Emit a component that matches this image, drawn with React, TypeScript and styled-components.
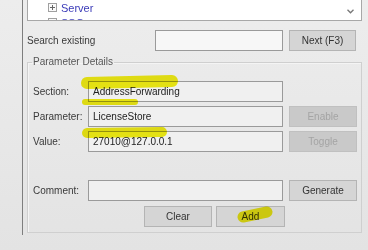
import React, { FC } from 'react';

import styled, { createGlobalStyle } from 'styled-components';

/**
 *
 * Styles
 */
const GlobalStyle = createGlobalStyle`
  html,
  body {
    margin: 0;
    padding: 0;
    background: #e4e4e4;
  }

  body {
    font-family: 'Liberation Sans', Arial, sans-serif;
    font-size: 10px;
    color: #333;
  }
`;

const Screen = styled.div`
  position: relative;
  display: flex;
  width: 368px;
  height: 250px;
  overflow: hidden;

  background: linear-gradient(#ededed, #e3e3e3);
`;

const Gutter = styled.div`
  width: 22px;
  flex: none;
`;

const Panel = styled.div`
  display: flex;
  box-sizing: border-box;
  width: 340px;
  height: 235px;
  padding-left: 4px;

  flex-direction: column;

  border-left: 1px solid #7e7e7e;
`;

const TreeBox = styled.div`
  position: relative;
  box-sizing: border-box;
  height: 21px;
  overflow: hidden;

  background: #fff;
  border: 1px solid #a8a8a8;
  border-top: none;
`;

const TreeRow = styled.div`
  display: flex;
  height: 15px;
  padding-left: 20px;

  align-items: center;
  gap: 4px;
`;

const PlusBox = styled.span`
  position: relative;
  display: block;
  box-sizing: border-box;
  width: 9px;
  height: 9px;

  background: #fafafa;
  border: 1px solid #a0a0a0;

  &::before,
  &::after {
    content: '';
    position: absolute;
    background: #666;
  }

  &::before {
    left: 1px;
    top: 3px;
    width: 5px;
    height: 1px;
  }

  &::after {
    left: 3px;
    top: 1px;
    width: 1px;
    height: 5px;
  }
`;

const TreeLabel = styled.span`
  color: #3b3bb8;
  font-size: 11px;
  line-height: 14px;
`;

const ScrollArrow = styled.svg`
  position: absolute;
  right: 7px;
  top: 9px;
`;

const SearchRow = styled.div`
  display: flex;
  height: 21px;
  margin-top: 9px;

  align-items: center;
`;

const SearchLabel = styled.span`
  flex: 1;
  color: #3a3a3a;
`;

const EndSpace = styled.span`
  width: 6px;
  flex: none;
`;

const TextBox = styled.div<{ width: number; light?: boolean }>`
  display: flex;
  box-sizing: border-box;
  width: ${({ width }) => width}px;
  height: 21px;
  padding: 0 4px;

  align-items: center;
  flex: none;

  color: #222;
  background: ${({ light }) => (light ? '#f7f7f7' : '#f0f0f0')};
  border: 1px solid #9a9a9a;
`;

const Button = styled.div<{ width: number; disabled?: boolean }>`
  display: flex;
  box-sizing: border-box;
  width: ${({ width }) => width}px;
  height: 21px;

  justify-content: center;
  align-items: center;
  flex: none;

  color: ${({ disabled }) => (disabled ? '#a4a4a4' : '#333')};
  background: ${({ disabled }) => (disabled ? '#c9c9c9' : '#d5d5d5')};
  border: 1px solid ${({ disabled }) => (disabled ? '#c0c0c0' : '#b4b4b4')};
`;

const SearchButton = styled(Button)`
  margin-left: 6px;
`;

const GroupBox = styled.fieldset`
  box-sizing: border-box;
  height: 177px;
  margin: 5px 0 0;
  padding: 13px 4px 0 5px;

  border: 1px solid #cfcfcf;
  box-shadow: inset 1px 1px 0 #f4f4f4;
`;

const GroupTitle = styled.legend`
  padding: 0 1px;
  margin-left: -1px;

  color: #555;
  line-height: 12px;
`;

const Rows = styled.div`
  display: flex;

  flex-direction: column;
  gap: 4px;
`;

const FormRow = styled.div<{ spaced?: boolean }>`
  display: flex;
  height: 21px;
  margin-top: ${({ spaced }) => (spaced ? 24 : 0)}px;

  align-items: center;
  gap: 6px;
`;

const FieldLabel = styled.span`
  width: 49px;
  flex: none;

  color: #3a3a3a;
`;

const ActionRow = styled.div`
  display: flex;
  padding-left: 111px;
  margin-top: 1px;

  gap: 4px;
`;

const Highlights = styled.svg`
  position: absolute;
  left: 0;
  top: 0;

  pointer-events: none;
  mix-blend-mode: multiply;
`;

/**
 *
 * Static items
 */
const fields = [
  { label: 'Section:', value: 'AddressForwarding' },
  { label: 'Parameter:', value: 'LicenseStore', action: 'Enable' },
  { label: 'Value:', value: '27010@127.0.0.1', action: 'Toggle' },
];

const strokes = [
  { x1: 87, y1: 83, x2: 172, y2: 81, w: 12 },
  { x1: 85, y1: 102, x2: 135, y2: 102, w: 6 },
  { x1: 87, y1: 133, x2: 162, y2: 132, w: 10 },
  { x1: 243, y1: 217, x2: 267, y2: 212, w: 11 },
];

const App: FC = () => (
  <>
    <GlobalStyle />
    <Screen>
      <Gutter />
      <Panel>
        <TreeBox>
          <TreeRow>
            <PlusBox />
            <TreeLabel>Server</TreeLabel>
          </TreeRow>
          <TreeRow>
            <PlusBox />
            <TreeLabel>SSO</TreeLabel>
          </TreeRow>
          <ScrollArrow width="7" height="5" viewBox="0 0 7 5">
            <polyline points="0.5,0.8 3.5,3.8 6.5,0.8" fill="none" stroke="#777" strokeWidth="1.3" />
          </ScrollArrow>
        </TreeBox>

        <SearchRow>
          <SearchLabel>Search existing</SearchLabel>
          <TextBox width={128} light />
          <SearchButton width={67}>Next (F3)</SearchButton>
          <EndSpace />
        </SearchRow>

        <GroupBox>
          <GroupTitle>Parameter Details</GroupTitle>
          <Rows>
            {fields.map((field) => (
              <FormRow key={field.label}>
                <FieldLabel>{field.label}</FieldLabel>
                <TextBox width={195}>{field.value}</TextBox>
                {field.action && (
                  <Button width={68} disabled>
                    {field.action}
                  </Button>
                )}
              </FormRow>
            ))}
            <FormRow spaced>
              <FieldLabel>Comment:</FieldLabel>
              <TextBox width={195} />
              <Button width={68}>Generate</Button>
            </FormRow>
            <ActionRow>
              <Button width={68}>Clear</Button>
              <Button width={69}>Add</Button>
            </ActionRow>
          </Rows>
        </GroupBox>
      </Panel>

      <Highlights width="368" height="250" viewBox="0 0 368 250">
        {strokes.map((s) => (
          <line
            key={`${s.x1}-${s.y1}`}
            x1={s.x1}
            y1={s.y1}
            x2={s.x2}
            y2={s.y2}
            stroke="#f2ee00"
            strokeOpacity={0.92}
            strokeWidth={s.w}
            strokeLinecap="round"
          />
        ))}
      </Highlights>
    </Screen>
  </>
);

export default App;
